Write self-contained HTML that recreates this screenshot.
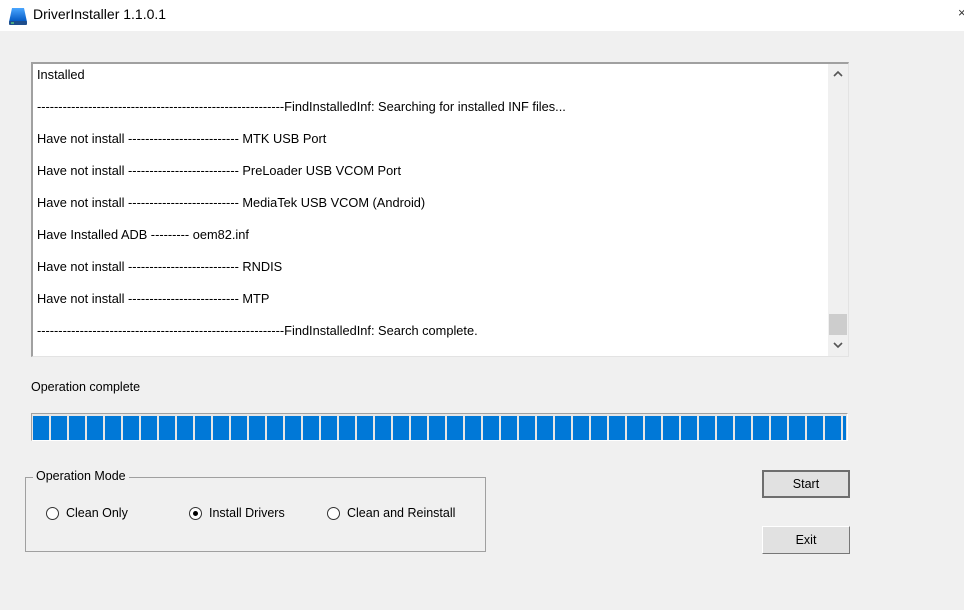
<!DOCTYPE html>
<html><head><style>
*{margin:0;padding:0;box-sizing:border-box}
body{width:964px;height:610px;background:#f0f0f0;font-family:"Liberation Sans",sans-serif;font-size:12px;color:#000;position:relative;overflow:hidden}
.abs{position:absolute}
.title{left:0;top:0;width:964px;height:31px;background:#fff}
.log{left:31px;top:62px;width:818px;height:295px;background:#fff;border-top:2px solid #a0a0a0;border-left:2px solid #a0a0a0;border-right:1px solid #e3e3e3;border-bottom:1px solid #e3e3e3;font-size:12.8px}
.line{position:absolute;left:4px;white-space:pre}
.sb{position:absolute;right:0;top:0;width:20px;height:100%;background:#f0f0f0}
.bar{left:31px;top:413px;width:817px;height:28px;border-top:1px solid #a0a0a0;border-left:1px solid #a0a0a0;border-right:1px solid #fff;border-bottom:1px solid #fff;background:#e6e6e6}
.fill{position:absolute;left:1px;top:2px;width:813px;height:24px;background:repeating-linear-gradient(90deg,#0078d7 0 16px,#e6e6e6 16px 18px)}
.grp{left:25px;top:477px;width:461px;height:75px;border:1px solid #a0a0a0}
.btn{width:88px;height:28px;background:#e1e1e1;text-align:center;line-height:26px;font-size:12.5px}
.radio{position:absolute;width:13px;height:13px;border-radius:50%;border:1px solid #333;background:#fff}
</style></head><body>
<div class="abs title">
<svg class="abs" style="left:8px;top:6px" width="20" height="20" viewBox="0 0 20 20"><defs><linearGradient id="g" x1="0" y1="0" x2="0" y2="1"><stop offset="0" stop-color="#4aa6ff"/><stop offset="1" stop-color="#0055c0"/></linearGradient></defs><path d="M4 2h12l3 14H1z" fill="url(#g)"/><rect x="1" y="15" width="18" height="4" rx="1" fill="#1e4e8c"/><rect x="3" y="16.5" width="3" height="1" fill="#7f7"/></svg>
<div class="abs" style="left:33px;top:6px;font-size:14px">DriverInstaller 1.1.0.1</div>
<div class="abs" style="left:958px;top:5px;font-size:13px;color:#333">×</div>
</div>
<div class="abs log">
<div class="line" style="top:3px">Installed</div>
<div class="line" style="top:35px">----------------------------------------------------------FindInstalledInf: Searching for installed INF files...</div>
<div class="line" style="top:67px">Have not install -------------------------- MTK USB Port</div>
<div class="line" style="top:99px">Have not install -------------------------- PreLoader USB VCOM Port</div>
<div class="line" style="top:131px">Have not install -------------------------- MediaTek USB VCOM (Android)</div>
<div class="line" style="top:163px">Have Installed ADB --------- oem82.inf</div>
<div class="line" style="top:195px">Have not install -------------------------- RNDIS</div>
<div class="line" style="top:227px">Have not install -------------------------- MTP</div>
<div class="line" style="top:259px">----------------------------------------------------------FindInstalledInf: Search complete.</div>
<div class="sb">
<svg class="abs" style="left:5px;top:6px" width="10" height="7"><path d="M1 6L5 2L9 6" stroke="#555" stroke-width="1.6" fill="none"/></svg>
<div class="abs" style="left:1px;top:250px;width:18px;height:21px;background:#cdcdcd"></div>
<svg class="abs" style="left:5px;top:278px" width="10" height="7"><path d="M1 1L5 5L9 1" stroke="#555" stroke-width="1.6" fill="none"/></svg>
</div>
</div>
<div class="abs" style="left:31px;top:380px;font-size:12.5px">Operation complete</div>
<div class="abs bar"><div class="fill"></div></div>
<div class="abs grp"></div>
<div class="abs" style="left:33px;top:469px;background:#f0f0f0;padding:0 3px;font-size:12.5px">Operation Mode</div>
<div class="radio" style="left:46px;top:507px"></div>
<div class="abs" style="left:66px;top:506px;font-size:12.5px">Clean Only</div>
<div class="radio" style="left:189px;top:507px"><div style="position:absolute;left:3px;top:3px;width:5px;height:5px;border-radius:50%;background:#000"></div></div>
<div class="abs" style="left:209px;top:506px;font-size:12.5px">Install Drivers</div>
<div class="radio" style="left:327px;top:507px"></div>
<div class="abs" style="left:347px;top:506px;font-size:12.5px">Clean and Reinstall</div>
<div class="abs btn" style="left:762px;top:470px;border:2px solid #6e6e6e;line-height:24px">Start</div>
<div class="abs btn" style="left:762px;top:526px;border:1px solid;border-color:#fff #777 #777 #fff">Exit</div>
</body></html>
